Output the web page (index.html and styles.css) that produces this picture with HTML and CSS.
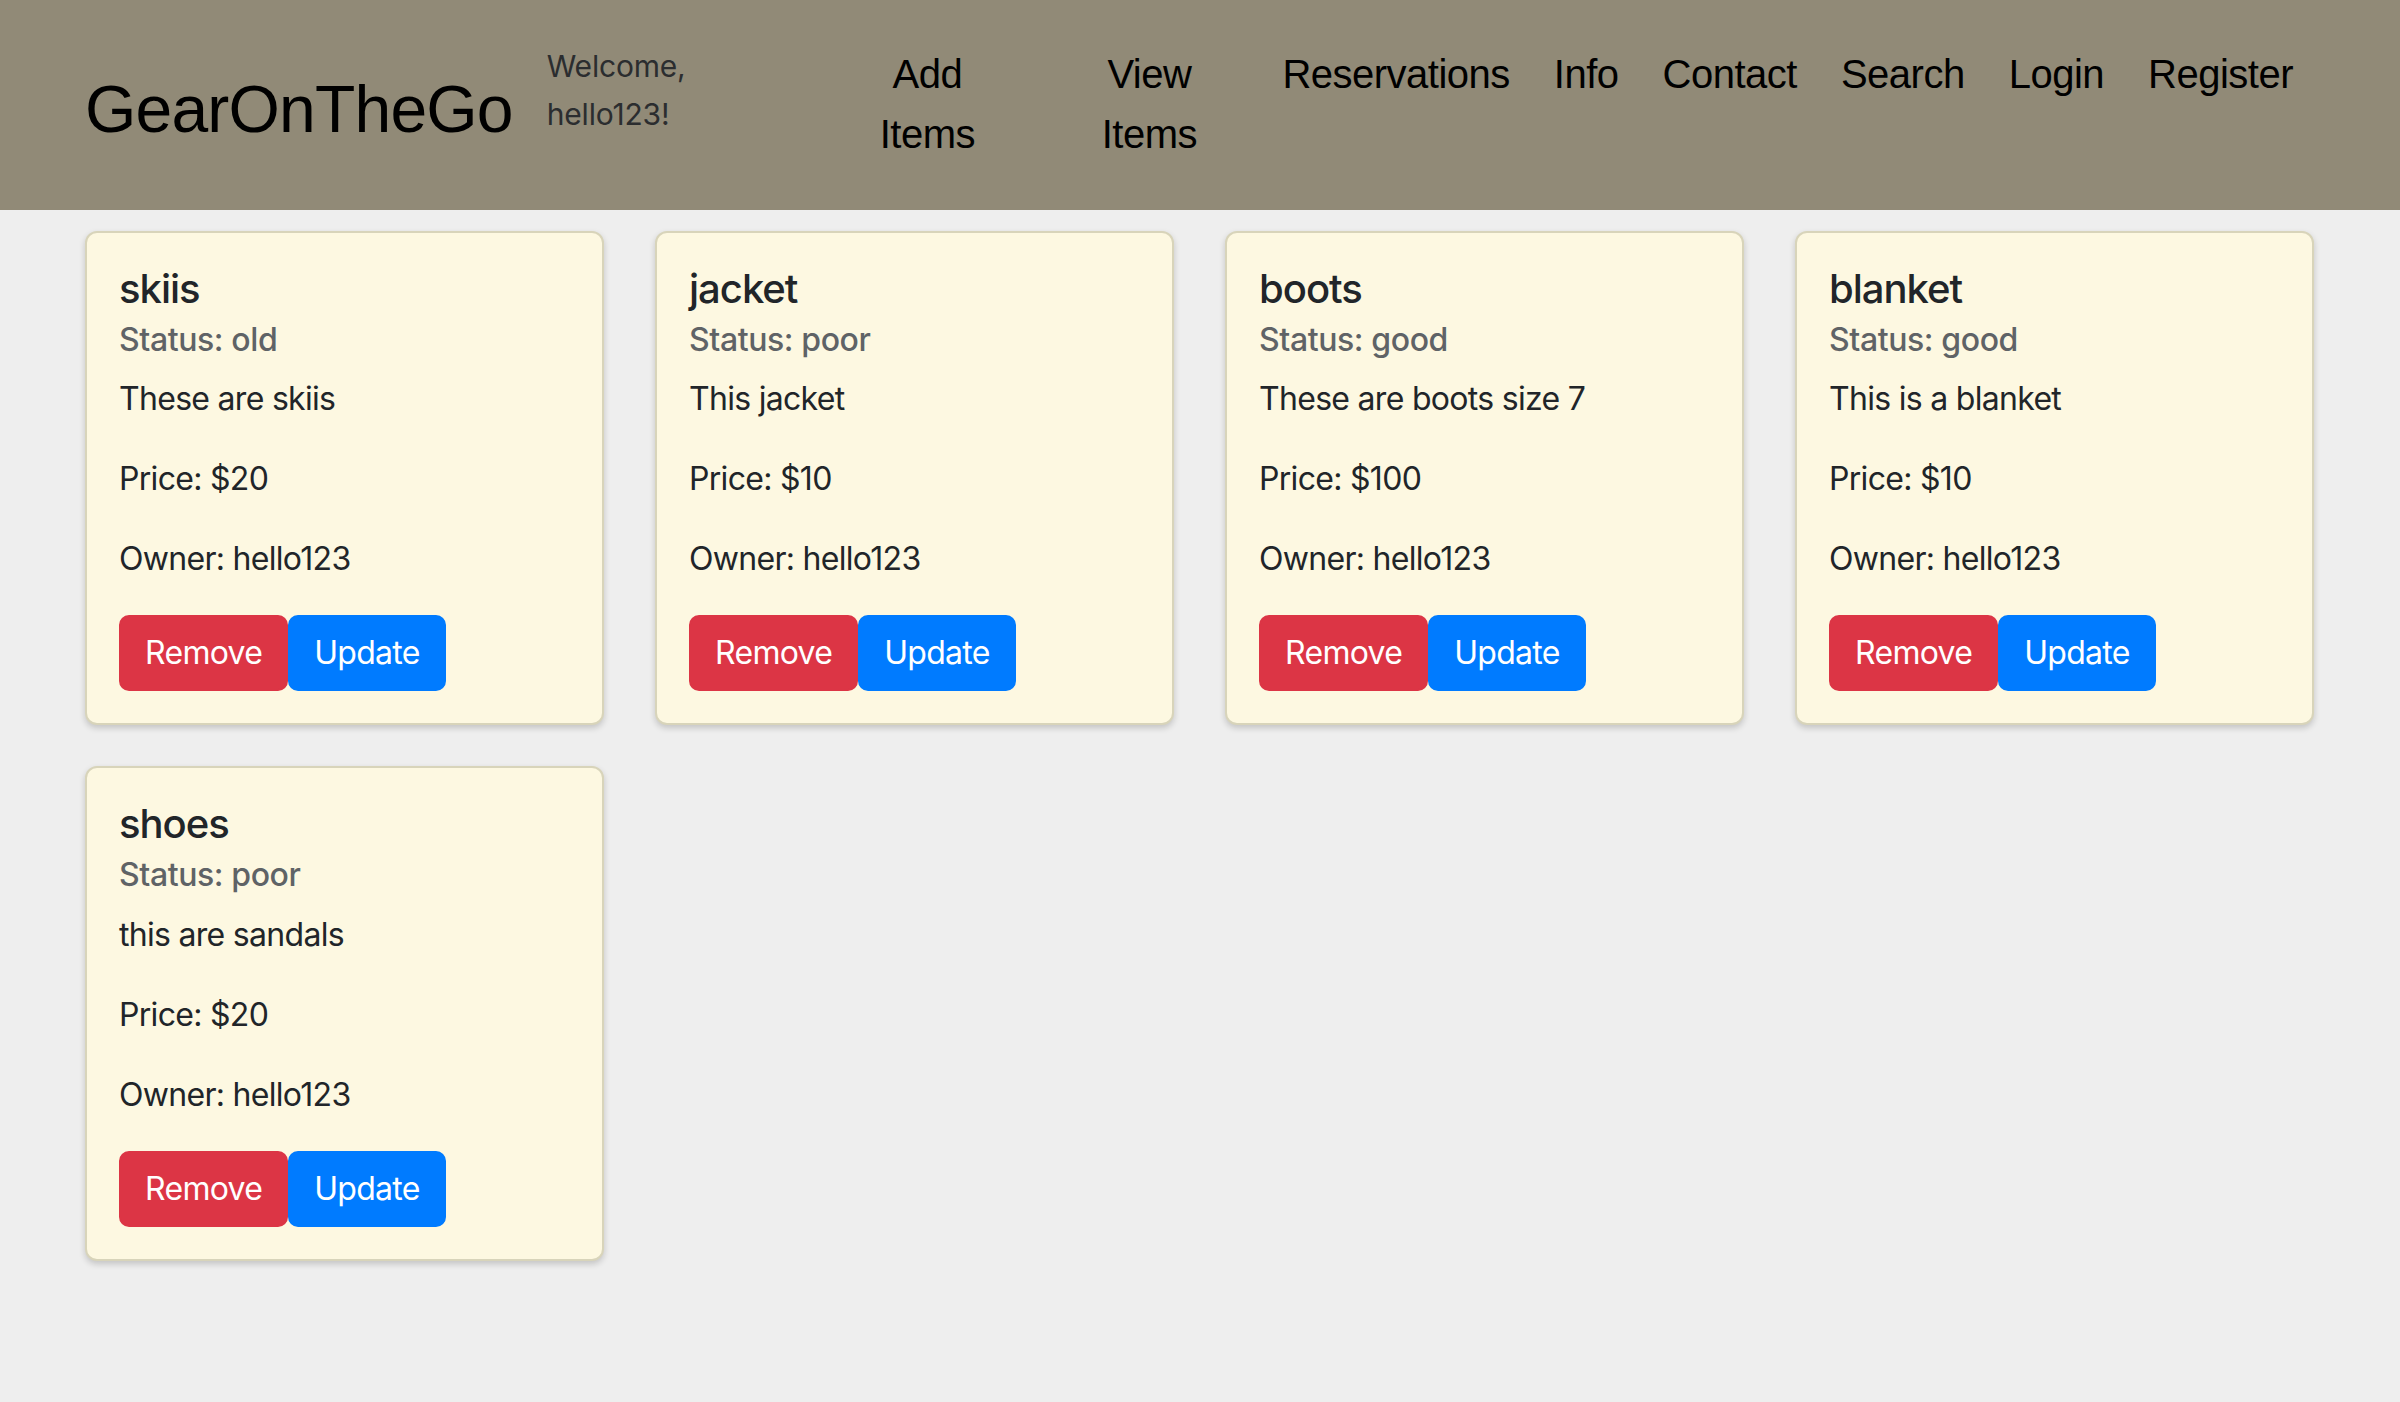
FILE: index.html
```html
<!DOCTYPE html>
<html lang="en">
<head>
<meta charset="utf-8">
<title>GearOnTheGo</title>
<link rel="stylesheet" href="styles.css">
</head>
<body>
<header class="site-header">
  <div class="brand">GearOnTheGo</div>
  <div class="welcome">Welcome, hello123!</div>
  <nav class="main-nav">
    <a class="nav-link nav-link--stacked" href="#">Add Items</a>
    <a class="nav-link nav-link--stacked" href="#">View Items</a>
    <a class="nav-link" href="#">Reservations</a>
    <a class="nav-link" href="#">Info</a>
    <a class="nav-link" href="#">Contact</a>
    <a class="nav-link" href="#">Search</a>
    <a class="nav-link" href="#">Login</a>
    <a class="nav-link" href="#">Register</a>
  </nav>
</header>

<main class="item-grid">
  <article class="card">
    <h5 class="card-title">skiis</h5>
    <h6 class="card-subtitle">Status: old</h6>
    <p class="card-text">These are skiis</p>
    <p class="card-text">Price: $20</p>
    <p class="card-text">Owner: hello123</p>
    <div class="card-actions">
      <button class="btn btn-danger">Remove</button><button class="btn btn-primary">Update</button>
    </div>
  </article>
  <article class="card">
    <h5 class="card-title">jacket</h5>
    <h6 class="card-subtitle">Status: poor</h6>
    <p class="card-text">This jacket</p>
    <p class="card-text">Price: $10</p>
    <p class="card-text">Owner: hello123</p>
    <div class="card-actions">
      <button class="btn btn-danger">Remove</button><button class="btn btn-primary">Update</button>
    </div>
  </article>
  <article class="card">
    <h5 class="card-title">boots</h5>
    <h6 class="card-subtitle">Status: good</h6>
    <p class="card-text">These are boots size 7</p>
    <p class="card-text">Price: $100</p>
    <p class="card-text">Owner: hello123</p>
    <div class="card-actions">
      <button class="btn btn-danger">Remove</button><button class="btn btn-primary">Update</button>
    </div>
  </article>
  <article class="card">
    <h5 class="card-title">blanket</h5>
    <h6 class="card-subtitle">Status: good</h6>
    <p class="card-text">This is a blanket</p>
    <p class="card-text">Price: $10</p>
    <p class="card-text">Owner: hello123</p>
    <div class="card-actions">
      <button class="btn btn-danger">Remove</button><button class="btn btn-primary">Update</button>
    </div>
  </article>
  <article class="card">
    <h5 class="card-title">shoes</h5>
    <h6 class="card-subtitle">Status: poor</h6>
    <p class="card-text">this are sandals</p>
    <p class="card-text">Price: $20</p>
    <p class="card-text">Owner: hello123</p>
    <div class="card-actions">
      <button class="btn btn-danger">Remove</button><button class="btn btn-primary">Update</button>
    </div>
  </article>
</main>
</body>
</html>
```

FILE: styles.css
```css
* { box-sizing: border-box; }

html, body {
  margin: 0;
  padding: 0;
}

body {
  background: #eeeeee;
  font-family: Inter, "Noto Sans", "Liberation Sans", sans-serif;
  font-size: 32px;
  line-height: 48px;
  color: #212529;
  min-height: 1402px;
}

.site-header {
  display: flex;
  align-items: flex-start;
  height: 210px;
  background: #918a77;
  padding: 0 85px 0 85px;
}

.brand {
  margin-top: 76px;
  font-family: "Liberation Sans", Arial, sans-serif;
  font-size: 66px;
  line-height: 66px;
  letter-spacing: -0.8px;
  color: #000;
  white-space: nowrap;
}

.welcome {
  margin-top: 42px;
  margin-left: 34px;
  width: 170px;
  font-size: 30px;
  line-height: 48px;
  letter-spacing: -0.2px;
  color: #2b2d2f;
}

.main-nav {
  display: flex;
  align-items: flex-start;
  margin-top: 44px;
  margin-left: auto;
}

.nav-link {
  display: block;
  padding: 0 22px;
  font-family: "Liberation Sans", Arial, sans-serif;
  font-size: 40px;
  line-height: 60px;
  letter-spacing: -0.5px;
  color: #000;
  text-decoration: none;
  white-space: nowrap;
}

.nav-link--stacked {
  width: 222px;
  padding: 0 30px;
  text-align: center;
  white-space: normal;
}

.item-grid {
  display: grid;
  grid-template-columns: repeat(4, 519px);
  column-gap: 51px;
  row-gap: 41px;
  padding: 21px 86px 0 85px;
  align-items: start;
}

.card {
  background: #fdf8e1;
  border: 2px solid #d8d4ba;
  border-radius: 12px;
  box-shadow: 0 3px 6px rgba(0, 0, 0, 0.18);
  padding: 32px;
  letter-spacing: -0.7px;
}

.card-title {
  margin: 0 0 16px;
  font-size: 40px;
  line-height: 48px;
  font-weight: 500;
  letter-spacing: -1px;
  color: #212529;
}

.card-subtitle {
  margin: -8px 0 16px;
  font-size: 32px;
  line-height: 38.4px;
  font-weight: 500;
  letter-spacing: -0.4px;
  color: #5f6366;
}

.card-text {
  margin: 0 0 32px;
}

.card-actions {
  display: flex;
}

.btn {
  display: inline-block;
  font-family: inherit;
  font-size: 32px;
  line-height: 48px;
  letter-spacing: -0.7px;
  padding: 12px 24px;
  border: 2px solid transparent;
  border-radius: 10px;
  color: #fff;
  cursor: pointer;
}

.btn-danger {
  background: #dc3545;
  border-color: #dc3545;
}

.btn-primary {
  background: #007bff;
  border-color: #007bff;
}
```
